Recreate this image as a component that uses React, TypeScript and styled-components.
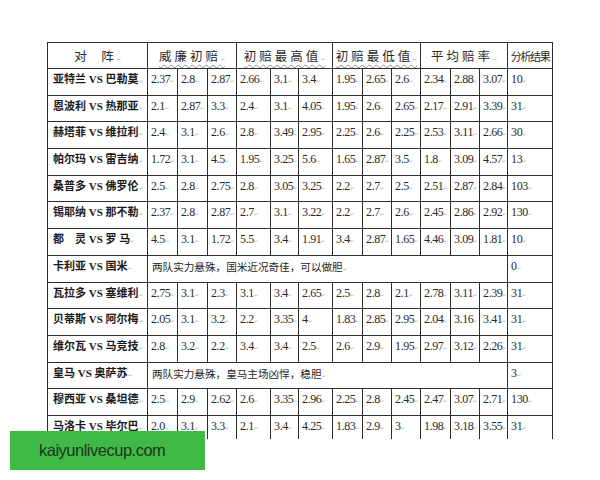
import React from 'react';
import styled, { createGlobalStyle, css } from 'styled-components';

const GlobalStyle = createGlobalStyle`
    html, body {
        margin: 0;
        padding: 0;
        background: #ffffff;
    }
`;

type Row =
    | { match: string; odds: string[]; result: string }
    | { match: string; note: string; result: string };

const colWidths = [100, 30, 30, 29, 34, 28, 34, 30, 29, 29, 30, 29, 28, 45];

const rows: Row[] = [
    { match: '亚特兰 VS 巴勒莫', odds: ['2.37', '2.8', '2.87', '2.66', '3.1', '3.4', '1.95', '2.65', '2.6', '2.34', '2.88', '3.07'], result: '10' },
    { match: '恩波利 VS 热那亚', odds: ['2.1', '2.87', '3.3', '2.4', '3.1', '4.05', '1.95', '2.6', '2.65', '2.17', '2.91', '3.39'], result: '31' },
    { match: '赫塔菲 VS 维拉利', odds: ['2.4', '3.1', '2.6', '2.8', '3.49', '2.95', '2.25', '2.6', '2.25', '2.53', '3.11', '2.66'], result: '30' },
    { match: '帕尔玛 VS 雷吉纳', odds: ['1.72', '3.1', '4.5', '1.95', '3.25', '5.6', '1.65', '2.87', '3.5', '1.8', '3.09', '4.57'], result: '13' },
    { match: '桑普多 VS 佛罗伦', odds: ['2.5', '2.8', '2.75', '2.8', '3.05', '3.25', '2.2', '2.7', '2.5', '2.51', '2.87', '2.84'], result: '103' },
    { match: '锡耶纳 VS 那不勒', odds: ['2.37', '2.8', '2.87', '2.7', '3.1', '3.22', '2.2', '2.7', '2.6', '2.45', '2.86', '2.92'], result: '130' },
    { match: '都\u3000灵 VS 罗 马', odds: ['4.5', '3.1', '1.72', '5.5', '3.4', '1.91', '3.4', '2.87', '1.65', '4.46', '3.09', '1.81'], result: '10' },
    { match: '卡利亚 VS 国米', note: '两队实力悬殊，国米近况奇佳，可以做胆', result: '0' },
    { match: '瓦拉多 VS 塞维利', odds: ['2.75', '3.1', '2.3', '3.1', '3.4', '2.65', '2.5', '2.8', '2.1', '2.78', '3.11', '2.39'], result: '31' },
    { match: '贝蒂斯 VS 阿尔梅', odds: ['2.05', '3.1', '3.2', '2.2', '3.35', '4', '1.83', '2.85', '2.95', '2.04', '3.16', '3.41'], result: '31' },
    { match: '维尔瓦 VS 马竞技', odds: ['2.8', '3.2', '2.2', '3.4', '3.4', '2.5', '2.6', '2.9', '1.95', '2.97', '3.12', '2.26'], result: '31' },
    { match: '皇马 VS 奥萨苏', note: '两队实力悬殊，皇马主场凶悍，稳胆', result: '3' },
    { match: '穆西亚 VS 桑坦德', odds: ['2.5', '2.9', '2.62', '2.6', '3.35', '2.96', '2.25', '2.8', '2.45', '2.47', '3.07', '2.71'], result: '130' },
    { match: '马洛卡 VS 毕尔巴', odds: ['2.0', '3.1', '3.3', '2.1', '3.4', '4.25', '1.83', '2.9', '3', '1.98', '3.18', '3.55'], result: '31' },
];

const Page = styled.div`
    position: relative;
    width: 600px;
    height: 480px;
    overflow: hidden;
    padding: 42px 0 0 47px;
    box-sizing: border-box;
`;

const Clip = styled.div`
    width: 506px;
    height: 397px;
    overflow: hidden;
`;

const Table = styled.table`
    border-collapse: collapse;
    table-layout: fixed;
    width: 505px;
    color: #222222;
`;

const HeadRow = styled.tr`
    height: 26px;
`;

const BodyRow = styled.tr`
    height: 26.7px;
`;

const cellBorder = css`
    border: 1px solid #2e2e2e;
    box-sizing: border-box;
    white-space: nowrap;
`;

const Th = styled.th<{ $spaced?: boolean; $narrow?: boolean; $wavy?: boolean }>`
    ${cellBorder}
    padding: 0;
    text-align: center;
    vertical-align: middle;
    font-family: 'Noto Sans CJK SC', sans-serif;
    font-weight: 400;
    font-size: ${(props) => (props.$narrow ? '11px' : '12.5px')};
    letter-spacing: ${(props) =>
        props.$narrow ? '-1.3px' : props.$spaced ? '3px' : '0'};
    color: #2a2a2a;

    span {
        ${(props) =>
            props.$wavy &&
            css`
                text-decoration: underline wavy #8a8a8a;
                text-decoration-thickness: 1px;
                text-underline-offset: 3px;
            `}
    }
`;

const MatchCell = styled.td`
    ${cellBorder}
    padding: 3px 0 0 5px;
    vertical-align: top;
    font-family: 'Liberation Serif', 'Noto Sans CJK SC', serif;
    font-weight: 700;
    font-size: 11px;
    line-height: 15px;
    color: #1a1a1a;
`;

const NumCell = styled.td`
    ${cellBorder}
    padding: 3px 0 0 3px;
    vertical-align: top;
    font-family: 'Liberation Serif', serif;
    font-size: 12px;
    letter-spacing: -0.4px;
    line-height: 15px;
    color: #2a2a2a;
`;

const NoteCell = styled.td`
    ${cellBorder}
    padding: 3px 0 0 4px;
    vertical-align: top;
    font-family: 'Noto Sans CJK SC', sans-serif;
    font-size: 10.6px;
    line-height: 15px;
    color: #1e1e1e;
`;

const Mark = styled.span`
    font-family: 'Liberation Sans', sans-serif;
    font-size: 5px;
    font-weight: 400;
    color: #b4b4b4;
    letter-spacing: 0;
`;

const Watermark = styled.div`
    position: absolute;
    left: 10px;
    top: 431px;
    width: 195px;
    height: 39px;
    background: #3fba44;
    display: flex;
    align-items: center;
    padding-left: 29px;
    box-sizing: border-box;
    font-family: 'Liberation Sans', Arial, sans-serif;
    font-size: 16.5px;
    letter-spacing: -0.5px;
    color: #1f3320;
`;

const P = () => <Mark>↵</Mark>;

export default function App() {
    return (
        <Page>
            <GlobalStyle />
            <Clip>
                <Table>
                    <colgroup>
                        {colWidths.map((w, i) => (
                            <col key={i} style={{ width: w }} />
                        ))}
                    </colgroup>
                    <thead>
                        <HeadRow>
                            <Th $spaced>
                                对&nbsp;&nbsp;阵<P />
                            </Th>
                            <Th colSpan={3} $spaced $wavy>
                                <span>威廉初赔</span>
                                <P />
                            </Th>
                            <Th colSpan={3} $spaced $wavy>
                                <span>初赔最高值</span>
                                <P />
                            </Th>
                            <Th colSpan={3} $spaced $wavy>
                                <span>初赔最低值</span>
                                <P />
                            </Th>
                            <Th colSpan={3} $spaced>
                                平均赔率<P />
                            </Th>
                            <Th $narrow>分析结果</Th>
                        </HeadRow>
                    </thead>
                    <tbody>
                        {rows.map((row) => (
                            <BodyRow key={row.match}>
                                <MatchCell>
                                    {row.match}
                                    <P />
                                </MatchCell>
                                {'odds' in row ? (
                                    row.odds.map((v, i) => (
                                        <NumCell key={i}>
                                            {v}
                                            <P />
                                        </NumCell>
                                    ))
                                ) : (
                                    <NoteCell colSpan={12}>
                                        {row.note}
                                        <P />
                                    </NoteCell>
                                )}
                                <NumCell>
                                    {row.result}
                                    <P />
                                </NumCell>
                            </BodyRow>
                        ))}
                    </tbody>
                </Table>
            </Clip>
            <Watermark>kaiyunlivecup.com</Watermark>
        </Page>
    );
}
